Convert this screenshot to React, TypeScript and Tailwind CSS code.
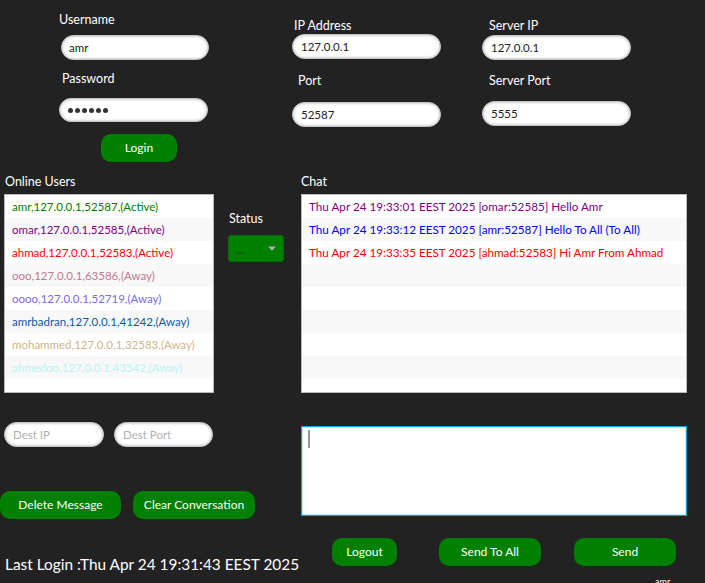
import React from "react";

const users: { text: string; color: string }[] = [
  { text: "amr,127.0.0.1,52587,(Active)", color: "text-[#008000]" },
  { text: "omar,127.0.0.1,52585,(Active)", color: "text-[#800080]" },
  { text: "ahmad,127.0.0.1,52583,(Active)", color: "text-[#ff0000]" },
  { text: "ooo,127.0.0.1,63586,(Away)", color: "text-[#c07890]" },
  { text: "oooo,127.0.0.1,52719,(Away)", color: "text-[#7b68ee]" },
  { text: "amrbadran,127.0.0.1,41242,(Away)", color: "text-[#0a5aa8]" },
  { text: "mohammed,127.0.0.1,32583,(Away)", color: "text-[#d2b48c]" },
  { text: "ahmedoo,127.0.0.1,43542,(Away)", color: "text-[#b8f4f4]" },
];

const chats: { text: string; color: string }[] = [
  { text: "Thu Apr 24 19:33:01 EEST 2025 [omar:52585] Hello Amr", color: "text-[#800080]" },
  { text: "Thu Apr 24 19:33:12 EEST 2025 [amr:52587] Hello To All (To All)", color: "text-[#0000ff]" },
  { text: "Thu Apr 24 19:33:35 EEST 2025 [ahmad:52583] Hi Amr From Ahmad", color: "text-[#ff0000]" },
];

const field =
  "bg-white rounded-full border border-[#c4c4c4] shadow-[inset_0_0_3px_rgba(0,0,0,0.35)] flex items-center text-[11.5px] text-[#222]";

const btn =
  "bg-[#008000] rounded-[10px] text-white text-[12px] flex items-center justify-center";

function Label({ children, cls }: { children: React.ReactNode; cls?: string }) {
  return <div className={"text-white text-[12.5px] leading-[17px] " + (cls ?? "")}>{children}</div>;
}

export default function App() {
  return (
    <div className="w-[705px] h-[583px] bg-[#222222] overflow-hidden font-['Lato',sans-serif] flex flex-col">
      {/* Top */}
      <div className="h-[173px] flex items-start shrink-0">
        <div className="ml-[59px] w-[150px] flex flex-col">
          <Label cls="mt-[11px]">Username</Label>
          <div className={field + " mt-[7px] ml-[2px] w-[148px] h-[25px] pl-[7px]"}>amr</div>
          <Label cls="mt-[10px] ml-[3px]">Password</Label>
          <div className={field + " mt-[11px] w-[149px] h-[24px] pl-[8px] gap-[2px]"}>
            {[0, 1, 2, 3, 4, 5].map((i) => (
              <span key={i} className="w-[5px] h-[5px] rounded-full bg-[#333]" />
            ))}
          </div>
          <div className={btn + " mt-[12px] ml-[42px] w-[76px] h-[28px]"}>Login</div>
        </div>
        <div className="ml-[83px] w-[149px] flex flex-col">
          <Label cls="mt-[17px] ml-[2px]">IP Address</Label>
          <div className={field + " mt-0 w-[149px] h-[25px] pl-[8px]"}>127.0.0.1</div>
          <Label cls="mt-[13px] ml-[6px]">Port</Label>
          <div className={field + " mt-[13px] w-[149px] h-[25px] pl-[8px]"}>52587</div>
        </div>
        <div className="ml-[41px] w-[149px] flex flex-col">
          <Label cls="mt-[17px] ml-[7px]">Server IP</Label>
          <div className={field + " mt-[1px] w-[149px] h-[25px] pl-[8px]"}>127.0.0.1</div>
          <Label cls="mt-[12px] ml-[7px]">Server Port</Label>
          <div className={field + " mt-[12px] w-[149px] h-[25px] pl-[8px]"}>5555</div>
        </div>
      </div>

      {/* Middle */}
      <div className="h-[220px] flex items-start shrink-0">
        <div className="ml-[4px] w-[210px] flex flex-col">
          <Label cls="ml-[1px]">Online Users</Label>
          <div className="mt-[4px] h-[199px] w-[210px] bg-white border border-[#b9b9b9] overflow-hidden">
            {users.map((u, i) => (
              <div
                key={i}
                className={
                  "h-[23px] pl-[7px] flex items-center text-[11.5px] whitespace-nowrap " +
                  (i % 2 === 1 ? "bg-[#f8f8f8] " : "bg-white ") +
                  u.color
                }
              >
                {u.text}
              </div>
            ))}
          </div>
        </div>
        <div className="ml-[14px] w-[56px] flex flex-col">
          <Label cls="mt-[37px] ml-[1px]">Status</Label>
          <div className="mt-[8px] h-[27px] w-[56px] bg-[#008000] rounded-[3px] border border-[#0a6a0a] flex items-center pl-[7px] pr-[6px] justify-between">
            <span className="text-[12px] text-[#333] leading-none mt-[3px]">...</span>
            <svg width="10" height="6" viewBox="0 0 10 6">
              <path d="M1 0.5 L9 0.5 L5 5 Z" fill="#a8a8a8" />
            </svg>
          </div>
        </div>
        <div className="ml-[17px] w-[386px] flex flex-col">
          <Label>Chat</Label>
          <div className="mt-[4px] h-[199px] w-[386px] bg-white border border-[#b9b9b9] overflow-hidden">
            {Array.from({ length: 9 }).map((_, i) => (
              <div
                key={i}
                className={
                  "h-[23px] pl-[7px] flex items-center text-[11.7px] whitespace-nowrap " +
                  (i % 2 === 1 ? "bg-[#f8f8f8] " : "bg-white ") +
                  (chats[i]?.color ?? "")
                }
              >
                {chats[i]?.text ?? ""}
              </div>
            ))}
          </div>
        </div>
      </div>

      {/* Bottom */}
      <div className="flex items-start shrink-0">
        <div className="w-[301px] flex flex-col">
          <div className="mt-[29px] flex">
            <div className={field + " ml-[4px] w-[100px] h-[25px] pl-[8px] text-[#b0b0b0]"}>Dest IP</div>
            <div className={field + " ml-[10px] w-[99px] h-[25px] pl-[8px] text-[#b0b0b0]"}>Dest Port</div>
          </div>
          <div className="mt-[44px] flex">
            <div className={btn + " w-[121px] h-[28px]"}>Delete Message</div>
            <div className={btn + " ml-[12px] w-[122px] h-[28px]"}>Clear Conversation</div>
          </div>
          <div className="mt-[35px] ml-[5px] text-white text-[15.4px] leading-[20px] whitespace-nowrap">
            Last Login :Thu Apr 24 19:31:43 EEST 2025
          </div>
        </div>
        <div className="w-[386px] flex flex-col">
          <div className="mt-[33px] h-[90px] w-[386px] border border-[#17a2e6] shadow-[inset_0_0_0_1px_#bfe6f7] bg-white pl-[6px] pt-[3px]">
            <div className="w-[2px] h-[18px] bg-[#999]" />
          </div>
          <div className="mt-[22px] flex">
            <div className={btn + " ml-[31px] w-[65px] h-[28px]"}>Logout</div>
            <div className={btn + " ml-[42px] w-[102px] h-[28px]"}>Send To All</div>
            <div className={btn + " ml-[33px] w-[102px] h-[28px]"}>Send</div>
          </div>
          <div className="mt-[10px] ml-[354px] text-white text-[9px] leading-[11px]">amr</div>
        </div>
      </div>
    </div>
  );
}
